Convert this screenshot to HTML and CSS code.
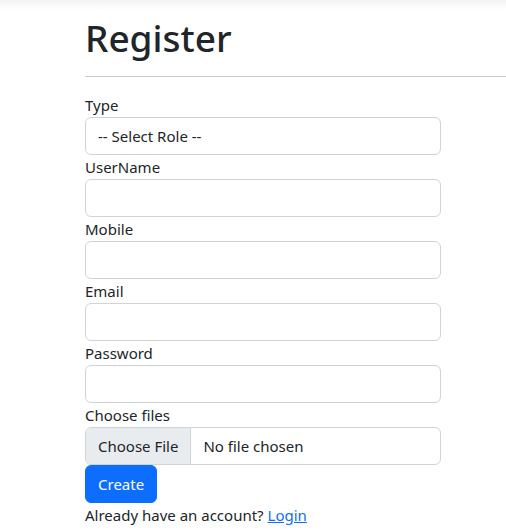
FILE: index.html
```html
<!DOCTYPE html>
<html lang="en">
<head>
<meta charset="utf-8">
<title>Register</title>
<link rel="stylesheet" href="styles.css">
</head>
<body>
<div class="topshade"></div>
<main class="container">
  <h1 class="title">Register</h1>
  <hr class="rule">
  <form class="form">
    <label class="label" for="type">Type</label>
    <div class="control select">-- Select Role --</div>
    <label class="label" for="user">UserName</label>
    <input class="control" id="user" type="text">
    <label class="label" for="mobile">Mobile</label>
    <input class="control" id="mobile" type="text">
    <label class="label" for="email">Email</label>
    <input class="control" id="email" type="text">
    <label class="label" for="pass">Password</label>
    <input class="control" id="pass" type="password">
    <label class="label">Choose files</label>
    <div class="control file">
      <span class="file-btn">Choose File</span>
      <span class="file-name">No file chosen</span>
    </div>
    <button class="btn" type="button">Create</button>
    <p class="note">Already have an account? <a class="link" href="#">Login</a></p>
  </form>
</main>
</body>
</html>
```
FILE: styles.css
```css
* { box-sizing: border-box; }
html, body {
  margin: 0;
  padding: 0;
  background: #fff;
}
body {
  font-family: "Noto Sans", "Open Sans", sans-serif;
  font-size: 15px;
  line-height: 24px;
  color: #212529;
}
.topshade {
  height: 10px;
  background: linear-gradient(#f3f3f3, #ffffff);
}
.container {
  padding-left: 85px;
}
.title {
  margin: 4px 0 0 0;
  font-size: 37px;
  line-height: 48px;
  font-weight: 500;
}
.rule {
  margin: 14px 0 16px 0;
  border: 0;
  border-top: 1px solid #c8c9ca;
  height: 0;
}
.form {
  display: flex;
  flex-direction: column;
  width: 356px;
}
.label {
  display: block;
  height: 24px;
}
.control {
  display: block;
  width: 356px;
  height: 38px;
  padding: 6px 12px;
  font: inherit;
  color: #212529;
  background: #fff;
  border: 1px solid #ced4da;
  border-radius: 6px;
  outline: none;
}
.select {
  line-height: 24px;
}
.file {
  display: flex;
  padding: 0;
  overflow: hidden;
}
.file-btn {
  background: #e9ecef;
  border-right: 1px solid #ced4da;
  padding: 6px 12px;
  line-height: 24px;
}
.file-name {
  padding: 6px 12px;
  line-height: 24px;
}
.btn {
  align-self: flex-start;
  height: 38px;
  padding: 6px 12px;
  font: inherit;
  color: #fff;
  background: #0d6efd;
  border: 1px solid #0d6efd;
  border-radius: 6px;
}
.note {
  margin: 0;
}
.link {
  color: #0d6efd;
  text-decoration: underline;
}
```
